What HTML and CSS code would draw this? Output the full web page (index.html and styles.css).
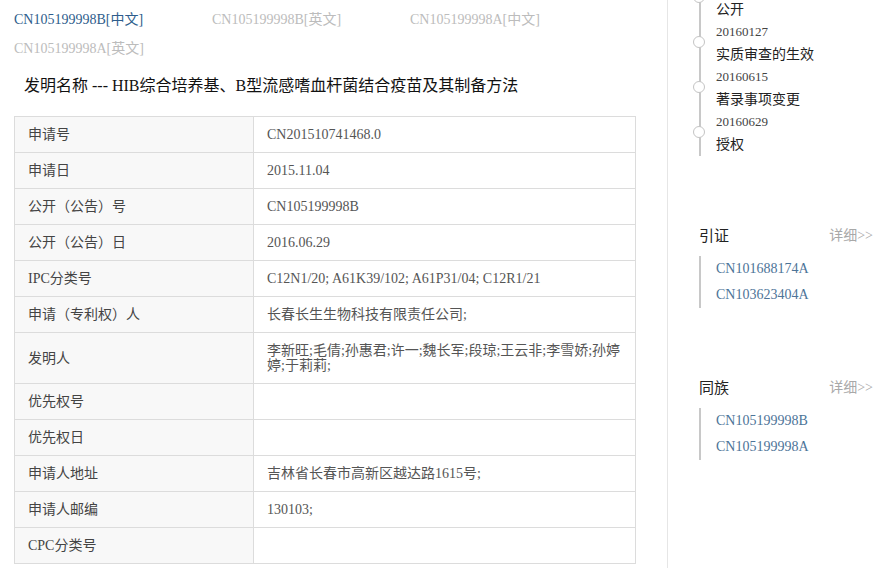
FILE: index.html
```html
<!DOCTYPE html>
<html>
  <head>
    <meta charset="utf-8">
    <title>CN105199998B</title>
    <link rel="stylesheet" href="styles.css">
  </head>
  <body>
    <div class="page">
      <div class="main">
        <div class="doc-tabs">
          <a class="doc-tab active">CN105199998B[中文]</a>
          <a class="doc-tab">CN105199998B[英文]</a>
          <a class="doc-tab">CN105199998A[中文]</a>
          <a class="doc-tab">CN105199998A[英文]</a>
        </div>
        <h1 class="doc-title">发明名称 --- HIB综合培养基、B型流感嗜血杆菌结合疫苗及其制备方法</h1>
        <table class="info-table">
          <tr><td class="info-label">申请号</td><td>CN201510741468.0</td></tr>
          <tr><td class="info-label">申请日</td><td>2015.11.04</td></tr>
          <tr><td class="info-label">公开（公告）号</td><td>CN105199998B</td></tr>
          <tr><td class="info-label">公开（公告）日</td><td>2016.06.29</td></tr>
          <tr><td class="info-label">IPC分类号</td><td>C12N1/20; A61K39/102; A61P31/04; C12R1/21</td></tr>
          <tr><td class="info-label">申请（专利权）人</td><td>长春长生生物科技有限责任公司;</td></tr>
          <tr><td class="info-label">发明人</td><td>李新旺;毛倩;孙惠君;许一;魏长军;段琼;王云非;李雪娇;孙婷婷;于莉莉;</td></tr>
          <tr><td class="info-label">优先权号</td><td></td></tr>
          <tr><td class="info-label">优先权日</td><td></td></tr>
          <tr><td class="info-label">申请人地址</td><td>吉林省长春市高新区越达路1615号;</td></tr>
          <tr><td class="info-label">申请人邮编</td><td>130103;</td></tr>
          <tr><td class="info-label">CPC分类号</td><td></td></tr>
        </table>
      </div>
      <div class="side">
        <ul class="timeline">
          <li><div class="tl-date"></div><div class="tl-status">公开</div></li>
          <li><div class="tl-date">20160127</div><div class="tl-status">实质审查的生效</div></li>
          <li><div class="tl-date">20160615</div><div class="tl-status">著录事项变更</div></li>
          <li><div class="tl-date">20160629</div><div class="tl-status">授权</div></li>
        </ul>
        <div class="side-section">
          <div class="side-head">
            <span class="side-title">引证</span>
            <a class="side-more">详细&gt;&gt;</a>
          </div>
          <div class="side-links">
            <a>CN101688174A</a>
            <a>CN103623404A</a>
          </div>
        </div>
        <div class="side-section">
          <div class="side-head">
            <span class="side-title">同族</span>
            <a class="side-more">详细&gt;&gt;</a>
          </div>
          <div class="side-links">
            <a>CN105199998B</a>
            <a>CN105199998A</a>
          </div>
        </div>
      </div>
    </div>
  </body>
</html>
```

FILE: styles.css
```css
html, body {
  margin: 0;
  padding: 0;
  background: #fff;
  overflow: hidden;
}
body {
  font-family: "Liberation Serif", "Noto Sans CJK SC", serif;
  color: #333;
}
.page {
  display: flex;
  height: 568px;
}

.main {
  width: 653px;
  padding-left: 14px;
  border-right: 1px solid #e6e6e6;
}

.doc-tabs {
  display: grid;
  grid-template-columns: repeat(3, 198px);
  padding-top: 5px;
}
.doc-tab {
  font-size: 14px;
  line-height: 29px;
  color: #bcbcbc;
  white-space: nowrap;
}
.doc-tab.active {
  color: #2e5d8c;
}

.doc-title {
  margin: 11px 0 18px 10px;
  font-size: 16px;
  font-weight: normal;
  line-height: 24px;
  color: #111;
}

.info-table {
  width: 622px;
  border-collapse: collapse;
  font-size: 14px;
  color: #555;
}
.info-table td {
  border: 1px solid #dcdcdc;
  padding: 10px 13px;
  line-height: 15px;
  vertical-align: middle;
}
.info-table .info-label {
  width: 212px;
  background-color: #f8f8f8;
  color: #444;
}

.side {
  flex: 1;
  padding-left: 31px;
  padding-right: 14px;
}

.timeline {
  list-style: none;
  margin: -24px 0 0 0;
  padding: 0 0 0 15px;
  border-left: 2px solid #c8c8c8;
}
.timeline li {
  position: relative;
  height: 45px;
}
.timeline li::before {
  content: "";
  position: absolute;
  left: -23px;
  top: 15px;
  width: 12px;
  height: 12px;
  box-sizing: border-box;
  border: 1.5px solid #c4c4c4;
  border-radius: 50%;
  background: #fff;
}
.tl-date {
  height: 22px;
  font-size: 13px;
  line-height: 22px;
  color: #444;
}
.tl-status {
  font-size: 14px;
  line-height: 23px;
  color: #222;
}

.side-section {
  margin-top: 66px;
}
.side-head {
  display: flex;
  justify-content: space-between;
  align-items: center;
  height: 24px;
}
.side-title {
  font-size: 15px;
  color: #222;
}
.side-more {
  font-size: 14px;
  color: #a8a8a8;
}
.side-links {
  margin-top: 10px;
  border-left: 2px solid #c8c8c8;
  padding-left: 15px;
}
.side-links a {
  display: block;
  font-size: 14px;
  line-height: 26px;
  color: #4d7498;
}
```
